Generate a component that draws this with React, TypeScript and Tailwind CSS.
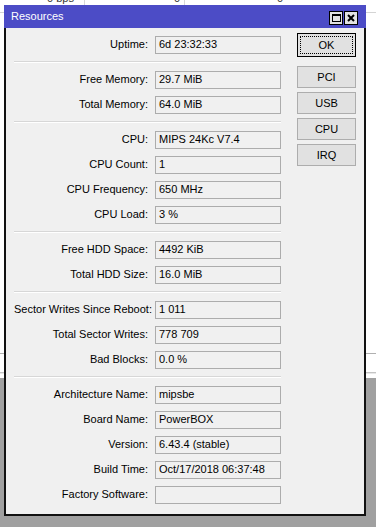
import React from 'react';

type Row = { label: string; value: string };

const groups: Row[][] = [
  [{ label: 'Uptime', value: '6d 23:32:33' }],
  [
    { label: 'Free Memory', value: '29.7 MiB' },
    { label: 'Total Memory', value: '64.0 MiB' },
  ],
  [
    { label: 'CPU', value: 'MIPS 24Kc V7.4' },
    { label: 'CPU Count', value: '1' },
    { label: 'CPU Frequency', value: '650 MHz' },
    { label: 'CPU Load', value: '3 %' },
  ],
  [
    { label: 'Free HDD Space', value: '4492 KiB' },
    { label: 'Total HDD Size', value: '16.0 MiB' },
  ],
  [
    { label: 'Sector Writes Since Reboot', value: '1 011' },
    { label: 'Total Sector Writes', value: '778 709' },
    { label: 'Bad Blocks', value: '0.0 %' },
  ],
  [
    { label: 'Architecture Name', value: 'mipsbe' },
    { label: 'Board Name', value: 'PowerBOX' },
    { label: 'Version', value: '6.43.4 (stable)' },
    { label: 'Build Time', value: 'Oct/17/2018 06:37:48' },
    { label: 'Factory Software', value: '' },
  ],
];

function Field({ label, value }: Row) {
  return (
    <div className="flex items-center h-[25px]">
      <div className="w-[135px] text-right whitespace-nowrap pr-[1px]">{label}:</div>
      <div className="ml-[6px] w-[126px] h-[18px] border border-[#acacac] bg-[#f0f0f0] flex items-center pl-[3px] whitespace-nowrap">
        {value}
      </div>
    </div>
  );
}

function Btn({ children }: { children: React.ReactNode }) {
  return (
    <div className="h-[22px] border border-[#adadad] bg-[#e1e1e1] flex items-center justify-center">
      {children}
    </div>
  );
}

export default function App() {
  return (
    <div
      className="relative w-[376px] h-[527px] overflow-hidden bg-white text-[11px] text-black"
      style={{ fontFamily: '"Liberation Sans", Arial, sans-serif' }}
    >
      {/* desktop behind the window */}
      <div className="flex flex-col h-full">
        <div className="h-[5px] overflow-hidden flex text-[#333]">
          <div className="w-[85px] border-r border-[#d8d8d8] text-right pr-[10px] leading-[12px] -mt-[8px]">0 bps</div>
          <div className="w-[100px] border-r border-[#d8d8d8] text-right pr-[4px] leading-[12px] -mt-[8px]">0</div>
          <div className="w-[98px] text-right leading-[12px] -mt-[8px]">0</div>
        </div>
        <div className="h-[7px]" />
        <div className="h-px bg-[#d4d4d4]" />
        <div className="h-[340px]" />
        <div className="h-px bg-[#b0b0b0]" />
        <div className="h-[18px]" />
        <div className="h-px bg-[#c4c4c4]" />
        <div className="h-px bg-[#e8e8e8]" />
        <div className="h-[4px]" />
        <div className="flex-1 bg-[#a0a0a0]" />
      </div>

      {/* window */}
      <div className="absolute left-[4px] top-[5px] w-[362px] h-[511px] flex flex-col">
        <div className="h-[23px] bg-[#4c4cc6] flex items-center pl-[7px] pr-[8px]">
          <span className="text-white text-[11px]">Resources</span>
          <div className="ml-auto flex gap-[1px] mt-[2px]">
            <div className="w-[14px] h-[14px] bg-[#e3e3e3] border border-black flex items-center justify-center">
              <div className="w-[9px] h-[8px] border border-black border-t-2" />
            </div>
            <div className="w-[14px] h-[14px] bg-[#e3e3e3] border border-black flex items-center justify-center">
              <svg width="8" height="8" viewBox="0 0 8 8">
                <path d="M1 1L7 7M7 1L1 7" stroke="#000" strokeWidth="2" />
              </svg>
            </div>
          </div>
        </div>
        <div className="flex-1 bg-[#f0f0f0] border-x-2 border-b-2 border-[#111] flex pl-[8px] pr-[8px] pt-[4px]">
          <div className="w-[267px] flex flex-col">
            {groups.map((g, i) => (
              <div key={i}>
                {i > 0 && (
                  <div className="h-[10px] flex flex-col justify-center">
                    <div className="h-px bg-[#d7d7d7]" />
                    <div className="h-px bg-white" />
                  </div>
                )}
                {g.map(r => (
                  <Field key={r.label} label={r.label} value={r.value} />
                ))}
              </div>
            ))}
          </div>
          <div className="ml-[16px] w-[59px] flex flex-col pt-[1px]">
            <div className="h-[24px] border border-black bg-[#e1e1e1] p-[2px]">
              <div className="h-full border border-dotted border-black flex items-center justify-center">OK</div>
            </div>
            <div className="mt-[9px] flex flex-col gap-[4px]">
              <Btn>PCI</Btn>
              <Btn>USB</Btn>
              <Btn>CPU</Btn>
              <Btn>IRQ</Btn>
            </div>
          </div>
        </div>
      </div>
    </div>
  );
}
